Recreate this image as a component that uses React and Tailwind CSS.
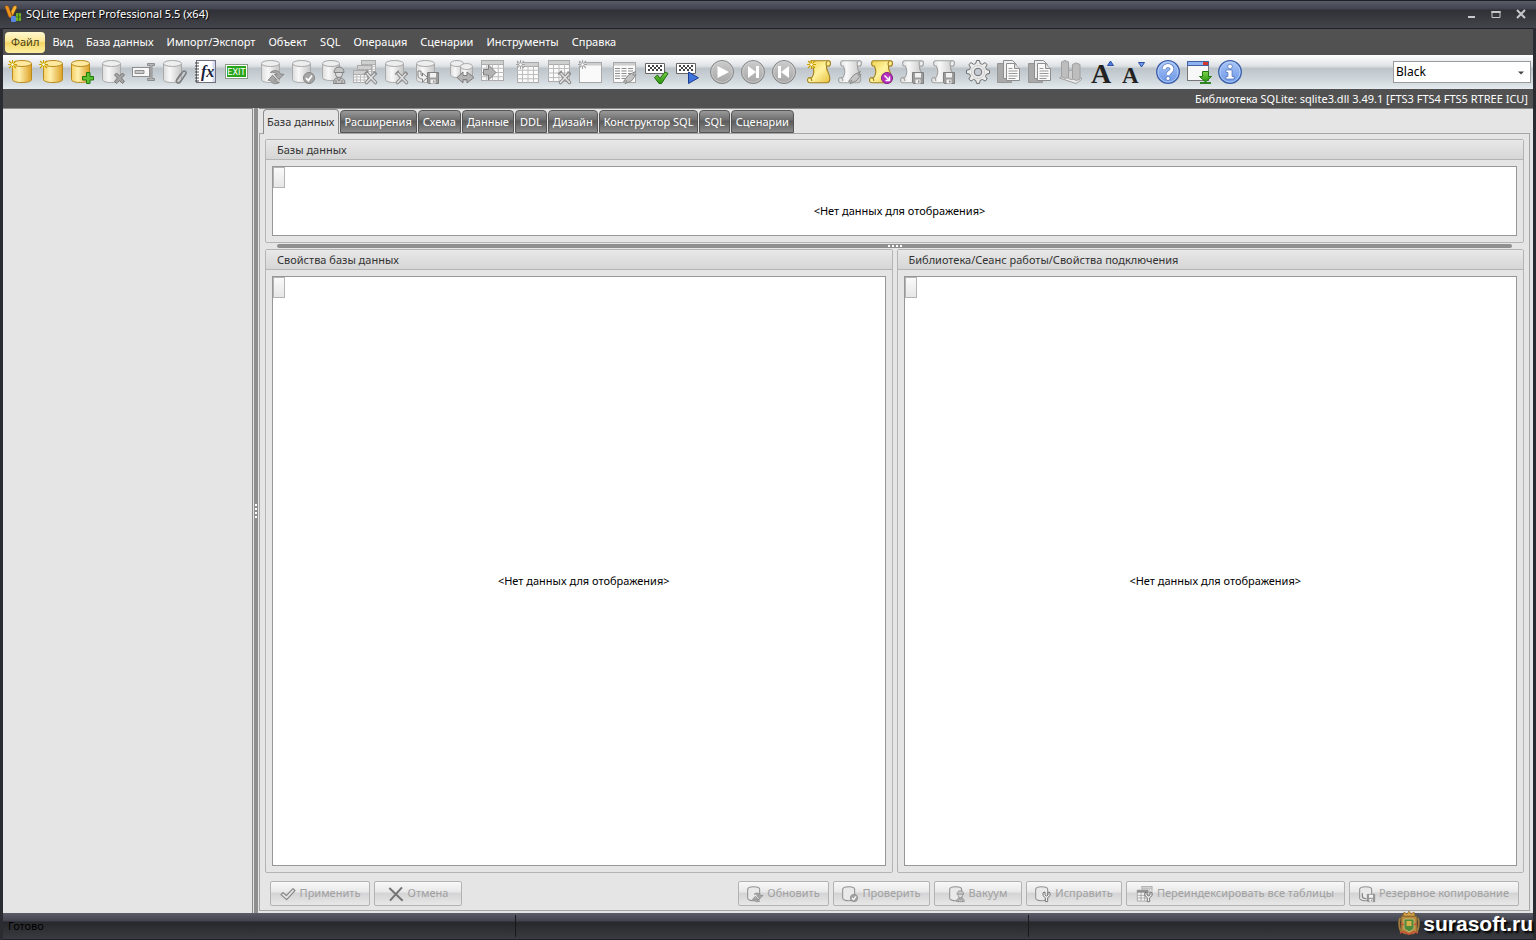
import React, { useState } from "react";

const menuItems = ["Файл", "Вид", "База данных", "Импорт/Экспорт", "Объект", "SQL", "Операция", "Сценарии", "Инструменты", "Справка"];

const tabs = ["База данных", "Расширения", "Схема", "Данные", "DDL", "Дизайн", "Конструктор SQL", "SQL", "Сценарии"];

/* ---------- icon parts ---------- */

function Defs() {
  return (
    <svg width="0" height="0" className="absolute" aria-hidden="true">
      <defs>
        <linearGradient id="gold" x1="0" x2="1" y1="0" y2="0">
          <stop offset="0" stopColor="#f6cf62" />
          <stop offset="0.35" stopColor="#fff0ae" />
          <stop offset="1" stopColor="#dda126" />
        </linearGradient>
        <linearGradient id="gray" x1="0" x2="1" y1="0" y2="0">
          <stop offset="0" stopColor="#dcdcdc" />
          <stop offset="0.35" stopColor="#f8f8f8" />
          <stop offset="1" stopColor="#c6c6c6" />
        </linearGradient>
        <linearGradient id="scrollGold" x1="0" x2="1" y1="0" y2="1">
          <stop offset="0" stopColor="#f0d048" />
          <stop offset="0.5" stopColor="#fff3a0" />
          <stop offset="1" stopColor="#e6bd38" />
        </linearGradient>
        <linearGradient id="blue" x1="0" x2="0" y1="0" y2="1">
          <stop offset="0" stopColor="#a9c6f8" />
          <stop offset="1" stopColor="#6b96e6" />
        </linearGradient>
        <linearGradient id="green" x1="0" x2="0" y1="0" y2="1">
          <stop offset="0" stopColor="#7fd24a" />
          <stop offset="1" stopColor="#27930f" />
        </linearGradient>
        <linearGradient id="round" x1="0" x2="0" y1="0" y2="1">
          <stop offset="0" stopColor="#cccccc" />
          <stop offset="1" stopColor="#a6a6a6" />
        </linearGradient>
      </defs>
    </svg>
  );
}

function Cylinder({ x = 1, gold, w = 19, h = 23, y = 0 }) {
  const stroke = gold ? "#b98a1c" : "#a9a9a9";
  const r = w / 2;
  return (
    <g transform={`translate(${x} ${y})`} stroke={stroke} strokeWidth="1">
      <path
        d={`M.5 3.5V${h - 3.5}C.5 ${h - 1.5} ${r / 2} ${h - 0.5} ${r} ${h - 0.5}S${w - 0.5} ${h - 1.5} ${w - 0.5} ${h - 3.5}V3.5`}
        fill={gold ? "url(#gold)" : "url(#gray)"}
      />
      <ellipse cx={r} cy="3.5" rx={r - 0.5} ry="3" fill={gold ? "#ffe9a0" : "#eeeeee"} />
    </g>
  );
}

function Star({ gray }) {
  const color = gray ? "#a4a4a4" : "#c9a000";
  return (
    <g>
      <circle cx="4.5" cy="4.5" r="3" fill={gray ? "#f4f4f4" : "#fff6a8"} />
      <path d="M4.5 0v9M0 4.5h9M1 1l7 7M8 1L1 8" stroke={color} strokeWidth="1.1" fill="none" />
      <circle cx="4.5" cy="4.5" r="1.2" fill="#fff" />
    </g>
  );
}

function Scroll({ gold }) {
  const stroke = gold ? "#a08022" : "#a2a2a2";
  const fill = gold ? "url(#scrollGold)" : "url(#gray)";
  return (
    <g stroke={stroke} strokeWidth="1.1" strokeLinejoin="round" fill={fill}>
      <path d="M4.5.8H21.500c2.400 0 2.600 3.800.6 5.200h-2.600c-.8 3.800 3.300 7 3.300 12.200 0 3-.8 4.600-3 4.600H3C.3 22.800-.2 19.200 1.500 17.800h3.200c2.600-3.600 2.600-8 .6-11.800H4.500C2 5.800 2 1 4.500.8z" />
      <path d="M21.500.8c-2.200 0-3 2.700-2 5.200h2.600c2-1.400 1.800-5.200-.6-5.200zM1.500 17.800c2-.5 3.500 1 3.200 3.200" fill={gold ? "#ffec8c" : "#ededed"} />
    </g>
  );
}

function Grid({ x = 1, y = 1, w = 22, h = 20, rows = 4, cols = 4 }) {
  const lines = [];
  for (let i = 1; i < cols; i++) lines.push(`M${x + (w / cols) * i} ${y + 4}V${y + h}`);
  for (let i = 1; i < rows; i++) lines.push(`M${x} ${y + 4 + ((h - 4) / rows) * i}h${w}`);
  return (
    <g stroke="#ababab" strokeWidth="1">
      <rect x={x + 0.5} y={y + 0.5} width={w - 1} height={h - 1} fill="#fafafa" />
      <rect x={x + 0.5} y={y + 0.5} width={w - 1} height="4" fill="#cfcfcf" />
      <path d={lines.join("")} fill="none" stroke="#bcbcbc" />
    </g>
  );
}

function Tools() {
  return (
    <g fill="none" strokeLinecap="round">
      <path d="M13.500 22.500l8.500-9M14 13.500l8.500 9" stroke="#8e8e8e" strokeWidth="3.600" />
      <path d="M13.500 22.500l8.500-9M14 13.500l8.500 9" stroke="#e2e2e2" strokeWidth="1.500" />
      <path d="M11.500 14l3-3M21 12l2.500 2" stroke="#8e8e8e" strokeWidth="1.500" />
    </g>
  );
}

function Disk() {
  return (
    <g>
      <path d="M12.500 12.500h11v11h-10l-1-1z" fill="#9c9c9c" stroke="#7f7f7f" />
      <path d="M15 13h6v4.500h-6zM15.500 19.500h5v4h-5z" fill="#f1f1f1" />
      <path d="M18 20.500h1.500v2H18z" fill="#888" />
    </g>
  );
}

function Refresh() {
  return (
    <g fill="#a8a8a8" stroke="#7c7c7c" strokeWidth=".8" strokeLinejoin="round">
      <path d="M10.500 12.500c3-3 8.500-2.500 10 1.500l3.500.3-5 5-4.500-4.800 2.800-.2c-1.200-1.800-4-2.300-6.800-1.800z" />
      <path d="M19.500 22.500c-3.500 2-7.500 1.500-9-2l-2.500-.2 4.500-5 4.500 4.800h-2.500c.8 1.500 2.500 2.400 5 2.400z" />
    </g>
  );
}

function CheckBadge() {
  return (
    <g>
      <circle cx="18" cy="18" r="5.500" fill="#a5a5a5" stroke="#868686" />
      <path d="M15 18l2.300 2.500L21 15.500" fill="none" stroke="#fff" strokeWidth="1.800" />
    </g>
  );
}

function Worker() {
  return (
    <g fill="#c4c4c4" stroke="#848484" strokeWidth="1">
      <path d="M11.500 23.500c0-4 2-6 5.500-6s6 2 6 6z" />
      <circle cx="17" cy="14" r="3.500" fill="#dedede" />
      <path d="M12 12.500c0-3.500 2-5.500 5-5.500s5 2 5 5.500z" />
      <path d="M15 18l2 3 2-3M14 23v-3M20 23v-3" fill="none" />
    </g>
  );
}

function Bolt() {
  return <path d="M22.500 11.500l-7 3.500-5 6.500 3.500-.8-2 3 7-3.200 4-6-3.200.6z" fill="#c4c4c4" stroke="#858585" strokeWidth=".9" strokeLinejoin="round" />;
}

function Clip() {
  return (
    <path d="M13.500 20.500l6-8.500c1.800-2.200 4.600-.4 3.200 2l-5.400 8c-1.600 2.300-5.200.5-3.700-2.200l4.300-6.300" fill="none" stroke="#7e7e7e" strokeWidth="1.500" />
  );
}

function Window({ x = 1, children }) {
  return (
    <g>
      <rect x={x + 0.5} y="2.500" width="22" height="20" fill="#fafafa" stroke="#a8a8a8" />
      <path d={`M${x + 1} 3h21v2.500h-21z`} fill="#cdcdcd" />
      {children}
    </g>
  );
}

function Flag() {
  return (
    <g>
      <path d="M1.500 13.500v-10h19v10z" fill="#fff" stroke="#666" />
      <path
        d="M4 5h2v2H4zM8 5h2v2H8zM12 5h2v2h-2zM16 5h2v2h-2zM6 7h2v2H6zM10 7h2v2h-2zM14 7h2v2h-2zM4 9h2v2H4zM8 9h2v2H8zM12 9h2v2h-2zM16 9h2v2h-2z"
        fill="#444"
      />
    </g>
  );
}

function Round({ children }) {
  return (
    <g>
      <circle cx="12" cy="12" r="11.500" fill="url(#round)" stroke="#858585" />
      <circle cx="12" cy="12" r="10.300" fill="none" stroke="#d0d0d0" strokeWidth=".7" />
      <g fill="#fff">{children}</g>
    </g>
  );
}

function Pages() {
  return (
    <g>
      <path d="M.5 3.500h14v19H.5z" fill="#a9a9a9" stroke="#969696" />
      <path d="M6.500.5h9l4 4v14h-13z" fill="#efefef" stroke="#8e8e8e" />
      <path d="M9.500 3.500h8l5 5v12h-13z" fill="#fafafa" stroke="#8e8e8e" />
      <path d="M17.500 3.500v5h5" fill="#ddd" stroke="#8e8e8e" />
      <path d="M11.500 8.500h4M11.500 11h9M11.500 13.500h9M11.500 16h9M11.500 18.500h7" stroke="#999" />
    </g>
  );
}

/* outlined database used on the bottom buttons */
function SmallDb() {
  return (
    <path
      d="M1 5C1 2.500 4 1 10 1s9 1.500 9 4v13.500c-1 2-4 3.500-8.500 3.500S1 21 1 18.500z"
      fill="#e9e9e9"
      stroke="#929292"
      strokeWidth="1.600"
    />
  );
}

function Wrench() {
  return (
    <path d="M12 10v4.500l3.500 3v6h3.500v-6l3.500-3V10l-3-1v4.500L17.300 15 15 13.500V9z" fill="#f1f1f1" stroke="#777" strokeWidth="1.500" strokeLinejoin="round" />
  );
}

function BlueRound({ children }) {
  return (
    <g>
      <circle cx="12" cy="12" r="11.300" fill="url(#blue)" stroke="#3c5fa8" strokeWidth="1.300" />
      <circle cx="12" cy="12" r="10" fill="none" stroke="#b9d0fa" strokeWidth=".8" />
      {children}
    </g>
  );
}

const icons = {
  dbNew: <><Cylinder x={4} gold w={20} /><Star /></>,
  dbAdd: (
    <>
      <Cylinder gold />
      <path d="M16.500 12.500h3.500v4h3.500V20H20v3.500h-3.500V20h-4v-3.500h4z" fill="#5cc12e" stroke="#23790d" />
    </>
  ),
  dbDelete: (
    <>
      <Cylinder />
      <path d="M13.500 15l2-2 3 3 3-3 2 2-3 3 3 3.500-2 2-3-3-3 3-2-2 3-3.500z" fill="#a3a3a3" stroke="#777" />
    </>
  ),
  rename: (
    <g fill="#f7f7f7" stroke="#8d8d8d">
      <rect x=".5" y="7.500" width="17" height="9" />
      <path d="M3 10.500h9v3H3z" fill="#c9c9c9" />
      <path d="M15.500 3.500h7v2h-2.500v13h2.500v2h-7v-2H18v-13h-2.500z" fill="#b5b5b5" />
    </g>
  ),
  dbAttach: <><Cylinder x={0} /><Clip /></>,
  fx: (
    <g>
      <rect x="2.500" y=".5" width="19" height="22" fill="#fff" stroke="#6f6f7d" />
      <path d="M18.500 1v21H21V1z" fill="#d5daee" />
      <path d="M1 3h4M1 6h4M1 9h4M1 12h4M1 15h4M1 18h4M1 21h4" stroke="#444" strokeWidth="1.200" />
      <text x="7" y="17" fontSize="16" fontStyle="italic" fontWeight="bold" fontFamily="Liberation Serif, serif" fill="#1a1f3c">fx</text>
    </g>
  ),
  exit: (
    <g>
      <rect x=".5" y="4.500" width="22" height="14" fill="#fff" stroke="#8a9a86" />
      <rect x="2" y="6" width="19" height="11" fill="#27a51c" />
      <text x="11.500" y="15" textAnchor="middle" fontSize="9" fontFamily="Roboto, sans-serif" fill="#fff">EXIT</text>
    </g>
  ),
  dbRefresh: <><Cylinder /><Refresh /></>,
  dbCheck: <><Cylinder /><CheckBadge /></>,
  dbWorker: <><Cylinder x={0} w={18} h={21} /><Worker /></>,
  reindex: (
    <>
      <Grid x={8} y={0} w={15} h={12} rows={3} />
      <Grid x={4} y={5} w={15} h={12} rows={3} />
      <Grid x={0} y={10} w={15} h={13} rows={3} />
      <Tools />
    </>
  ),
  dbTools: <><Cylinder /><Tools /></>,
  dbBackup: (
    <>
      <Cylinder />
      <Disk />
      <path d="M3 11v4c0 3 2 4 4.500 4v3l5-4.500-5-4.500v3c-1 0-1.500-.5-1.500-2v-3z" fill="#f2f2f2" stroke="#7e7e7e" />
    </>
  ),
  compare: (
    <>
      <Cylinder x={0} w={14} h={18} />
      <Cylinder x={10} y={3} w={13} h={18} />
      <path d="M7 17.500l6-5.500v3.500h4V12l7 5.500-7 5.500v-3.500h-4V23z" fill="#b4b4b4" stroke="#7e7e7e" />
    </>
  ),
  importTable: (
    <>
      <Grid x={0} y={0} w={23} h={21} rows={4} />
      <path d="M2.500 9.500h5V5l7.500 7.500L7.500 20v-5h-5z" fill="#b3b3b3" stroke="#808080" />
    </>
  ),
  tableNew: <><Grid x={1} y={2} w={22} h={21} /><Star gray /></>,
  tableTools: <><Grid x={1} y={0} w={22} h={22} /><Tools /></>,
  windowNew: <><Window /><Star gray /></>,
  queryBolt: (
    <>
      <Window x={0}>
        <path d="M2 8.500h19M2 11h19M2 13.500h19M2 16h19M2 18.500h19" stroke="#8f8f8f" strokeDasharray="5 1.500" />
      </Window>
      <Bolt />
    </>
  ),
  flagCheck: (
    <>
      <Flag />
      <path d="M10.500 17.500l3-2.500 2.500 3.500 5-6.500 3 1.500-6.500 10h-2.500z" fill="url(#green)" stroke="#1f6d0d" />
    </>
  ),
  flagRun: (
    <>
      <Flag />
      <path d="M13.500 12v11.500l10-5.700z" fill="#3f74dc" stroke="#1e3f91" strokeLinejoin="round" />
    </>
  ),
  play: <Round><path d="M7.500 6L19 12 7.500 18z" /></Round>,
  last: <Round><path d="M7 6l8 6-8 6zM15 6h3v12h-3z" /></Round>,
  first: <Round><path d="M17 6l-8 6 8 6zM6 6h3v12H6z" /></Round>,
  scrollNew: <><Scroll gold /><Star /></>,
  scrollBolt: <><Scroll /><Bolt /></>,
  scrollRun: (
    <>
      <Scroll gold />
      <circle cx="18" cy="18" r="5.500" fill="#b730bd" stroke="#802187" />
      <path d="M15.500 15.500l4.500 4.500M20.500 16.500v4h-4" fill="none" stroke="#fff" strokeWidth="1.500" />
    </>
  ),
  scrollSave: <><Scroll /><Disk /></>,
  gear: (
    <g stroke="#6f6f6f">
      <path
        d="M10.500.5h3l.6 3 2.300.9L19 2.600l2.200 2.100-1.700 2.600 1 2.300 3 .7v3.200l-3 .6-1 2.300 1.700 2.600-2.200 2.100-2.600-1.700-2.300 1-.6 3h-3l-.7-3-2.200-1L5 21.100 2.800 19l1.700-2.600-.9-2.300-3.100-.6v-3.200l3.100-.7.9-2.300-1.700-2.600L5 2.600l2.600 1.800 2.200-.9z"
        fill="#ececec"
        strokeLinejoin="round"
      />
      <circle cx="12" cy="12" r="3.800" fill="#c3cad1" />
      <circle cx="12" cy="12" r="6.500" fill="none" stroke="#cfcfcf" />
    </g>
  ),
  copy: <Pages />,
  chart: (
    <g stroke="#a0a0a0" strokeLinejoin="round">
      <path d="M.5 18l4-2.500 18 2.500v1.500L17 23.500z" fill="#ededed" />
      <path d="M2.500 2l3.500-1.500L9.500 2v15.500l-3 1-4-1.500z" fill="#bdbdbd" />
      <path d="M9.500 11l2.500-1 2 1v8l-2 .5-2.500-1z" fill="#cfcfcf" />
      <path d="M13.500 4.500l3.500-1.500 4 1.500V19l-3.500 1.500-4-1.500z" fill="#bdbdbd" />
    </g>
  ),
  fontUp: (
    <g>
      <text x="1" y="23" fontSize="28" fontWeight="bold" fontFamily="Liberation Serif, serif" fill="#222">A</text>
      <path d="M17.500 5.500L20.500 1l3 4.500z" fill="#4d7cdb" stroke="#2c51a5" />
    </g>
  ),
  fontDown: (
    <g>
      <text x="1" y="23" fontSize="23" fontWeight="bold" fontFamily="Liberation Serif, serif" fill="#222">A</text>
      <path d="M17.500 2.500l3 4.500 3-4.500z" fill="#6f97e8" stroke="#2c51a5" />
    </g>
  ),
  help: (
    <BlueRound>
      <path d="M8 9.200C8 4.500 16 4.500 16 9c0 3-4 2.800-4 6" fill="none" stroke="#3c5fa8" strokeWidth="4.200" />
      <path d="M8 9.200C8 4.500 16 4.500 16 9c0 3-4 2.800-4 6" fill="none" stroke="#fff" strokeWidth="3.200" />
      <circle cx="12" cy="18.500" r="2" fill="#fff" stroke="#3c5fa8" strokeWidth=".6" />
    </BlueRound>
  ),
  download: (
    <g>
      <rect x=".5" y="1.500" width="21" height="19" fill="#f8f8f8" stroke="#777" />
      <path d="M.5 1.500h21v4H.5z" fill="#8db1f2" stroke="#40609f" />
      <path d="M16 2h5v3h-5z" fill="#d2392c" />
      <path d="M15.500 11.500h6v5h3L18.500 22l-6-5.500h3z" fill="url(#green)" stroke="#1f7a0d" />
      <path d="M13 23h11" stroke="#1f7a0d" strokeWidth="1.800" />
    </g>
  ),
  info: (
    <BlueRound>
      <circle cx="12" cy="6.500" r="2.300" fill="#fff" stroke="#3c5fa8" strokeWidth=".6" />
      <path d="M8 10h6v6.500h2v2.500H8v-2.500h2v-4H8z" fill="#fff" stroke="#3c5fa8" strokeWidth=".6" />
    </BlueRound>
  ),
  apply: (
    <path d="M1.500 13l3-3 5 4.500L19.500 4l3 3L10 20.500z" fill="#e6e6e6" stroke="#868686" strokeWidth="1.800" strokeLinejoin="round" />
  ),
  cancel: <path d="M2 3l20 19M21 2L3 22" stroke="#747474" strokeWidth="3" fill="none" />,
  smallRefresh: <><SmallDb /><Refresh /></>,
  smallCheck: <><SmallDb /><CheckBadge /></>,
  smallWorker: <><SmallDb /><Worker /></>,
  smallRepair: <><SmallDb /><Wrench /></>,
  smallBackup: (
    <>
      <SmallDb />
      <path d="M5 11v4c0 3 2 4 6 4" fill="none" stroke="#858585" strokeWidth="2" />
      <Disk />
    </>
  ),
  smallReindex: (
    <>
      <Grid x={7} y={0} w={16} h={14} rows={3} />
      <g stroke="#8f8f8f">
        <path d="M.5 6.500h16v16H.5z" fill="#f4f4f4" />
        <path d="M.5 6.500h16v3H.5z" fill="#8f8f8f" />
        <path d="M6 10v12M11.500 10v12M1 14h15M1 18h15" />
      </g>
      <Wrench />
    </>
  ),
};

function Icon({ name, className = "h-6 w-6" }) {
  return (
    <svg viewBox="0 0 24 24" className={`shrink-0 overflow-visible ${className}`} aria-hidden="true">
      {icons[name]}
    </svg>
  );
}

const toolbar = [
  ["dbNew", "dbNew", "dbAdd", "dbDelete", "rename", "dbAttach", "fx", "exit"],
  ["dbRefresh", "dbCheck", "dbWorker", "reindex", "dbTools", "dbBackup"],
  ["compare", "importTable"],
  ["tableNew", "tableTools", "windowNew"],
  ["queryBolt", "flagCheck", "flagRun"],
  ["play", "last", "first"],
  ["scrollNew", "scrollBolt", "scrollRun", "scrollSave", "scrollSave"],
  ["gear", "copy", "copy", "chart", "fontUp", "fontDown"],
  ["help", "download", "info"],
];

/* ---------- window parts ---------- */

function TitleBar() {
  return (
    <header className="flex h-7 items-center border-t border-[#1f2025] bg-[linear-gradient(#5a5c67_0,#41434e_8px,#303136_9px,#43454c_100%)] pb-px pl-1 pr-[7px]">
      <svg viewBox="0 0 18 18" className="mr-1 h-[18px] w-[18px]" aria-hidden="true">
        <path d="M1 1.500c2-1.500 3.500-.5 4 1.500l3 8c-.5 2-2.500 2-3.500 0z" fill="#f0941e" stroke="#a85a10" strokeWidth=".5" />
        <path d="M9.500 1.500c2-1.500 3.500-.5 3 1.500L8.500 11 7 6.500z" fill="#ffb62e" stroke="#a85a10" strokeWidth=".5" />
        <rect x="7" y="11" width="5" height="6" rx="1" fill="#5b86e0" />
        <rect x="12" y="8" width="5" height="8" rx="1" fill="#72b32a" />
        <path d="M12 12h5M14.500 8v8" stroke="#2f5c12" strokeWidth=".7" />
      </svg>
      <h1 className="text-white [text-shadow:1px_1px_1px_#000]">SQLite Expert Professional 5.5 (x64)</h1>
      <div className="ml-auto flex gap-[9px] text-[#c6c8cc]">
        <button aria-label="Свернуть" className="flex h-4 w-4 items-center justify-center">
          <svg viewBox="0 0 12 12" className="h-3 w-3"><path d="M3 9h7" stroke="currentColor" strokeWidth="2" /></svg>
        </button>
        <button aria-label="Развернуть" className="flex h-4 w-4 items-center justify-center">
          <svg viewBox="0 0 12 12" className="h-3 w-3"><path d="M2 3v6.500h8V3" stroke="currentColor" fill="none" /><path d="M1.500 4h9" stroke="currentColor" strokeWidth="2" /></svg>
        </button>
        <button aria-label="Закрыть" className="flex h-4 w-4 items-center justify-center">
          <svg viewBox="0 0 12 12" className="h-3 w-3"><path d="M2 2l8 8M10 2l-8 8" stroke="currentColor" strokeWidth="2" /></svg>
        </button>
      </div>
    </header>
  );
}

function MenuBar() {
  return (
    <nav className="flex h-[27px] items-center gap-px border-t border-[#1f2025] bg-[#515151] pl-0.5">
      {menuItems.map((item, i) => (
        <button
          key={item}
          className={
            i === 0
              ? "h-[21px] rounded-sm bg-[linear-gradient(#fff8d0_0,#fbe794_45%,#f3d566_50%,#fdf0a0_100%)] px-1.5 text-[#4a3f18]"
              : "h-[21px] px-1.5 text-white"
          }
        >
          {item}
        </button>
      ))}
    </nav>
  );
}

function Toolbar() {
  return (
    <div className="flex h-[34px] items-center bg-[linear-gradient(#ffffff_0,#e1e4e7_30%,#d3d7db_36%,#bcc4ca_38%,#cdd5da_70%,#e4eaed_100%)] pl-px pr-0.5">
      <div className="flex gap-1">
        {toolbar.map((group, i) => (
          <div key={i} className="flex">
            {group.map((name, j) => (
              <button key={j} aria-label={name} className="flex h-7 w-[31px] items-center justify-center">
                <Icon name={name} />
              </button>
            ))}
          </div>
        ))}
      </div>
      <div className="relative ml-auto">
        <select aria-label="Тема" defaultValue="Black" className="h-[22px] w-[138px] appearance-none border border-[#9a9a9a] bg-white pl-0.5 text-xs text-black">
          <option>Black</option>
        </select>
        <svg viewBox="0 0 8 4" className="pointer-events-none absolute right-1.5 top-2.5 h-1 w-2"><path d="M1 .5h6L4 3.500z" fill="#444" /></svg>
      </div>
    </div>
  );
}

function Tabs() {
  const [active, setActive] = useState(0);
  return (
    <div role="tablist" className="relative z-10 -mb-px flex h-[25px] gap-px pl-1">
      {tabs.map((tab, i) => (
        <button
          key={tab}
          role="tab"
          aria-selected={i === active}
          onClick={() => setActive(i)}
          className={
            i === active
              ? "rounded-t border border-b-0 border-[#8c8c8c] bg-[#e5e5e5] px-[3px] text-[#333]"
              : "mb-px mt-px rounded-t-sm border border-[#555] bg-[linear-gradient(#9a9a9a_0,#707070_40%,#5c5c5c_50%,#8a8a8a_100%)] px-1 pt-px text-white"
          }
        >
          {tab}
        </button>
      ))}
    </div>
  );
}

function Group({ title, className }) {
  return (
    <section className={`flex flex-col rounded-xs border border-[#b4b4b4] ${className}`}>
      <h2 className="h-5 border-b border-[#b4b4b4] bg-[linear-gradient(#e8e8e8,#d6d6d6)] pl-[11px] leading-5 text-[#333]">{title}</h2>
      <div className="m-1.5 flex flex-1 flex-col border border-[#979797] bg-white">
        <div className="h-[21px] w-3 border border-[#b4b4b4] bg-[linear-gradient(#fafafa,#e6e6e6)]" />
        <div className="flex flex-1 items-center justify-center pl-2.5 text-black">&lt;Нет данных для отображения&gt;</div>
      </div>
    </section>
  );
}

function ActionButton({ icon, label, className }) {
  return (
    <button disabled className={`flex h-[25px] items-center justify-center gap-1 rounded-xs border border-[#b2b2b2] bg-[linear-gradient(#f8f8f8_0,#e9e9ea_42%,#d4d4d6_50%,#e8e8e8_100%)] text-[#a0a0a0] ${className}`}>
      <Icon name={icon} className="h-4 w-4" />
      {label}
    </button>
  );
}

function Actions() {
  return (
    <div className="flex gap-1 px-[5px] pt-2">
      <ActionButton icon="apply" label="Применить" className="w-[100px]" />
      <ActionButton icon="cancel" label="Отмена" className="w-[88px]" />
      <div className="flex-1" />
      <ActionButton icon="smallRefresh" label="Обновить" className="w-[91px]" />
      <ActionButton icon="smallCheck" label="Проверить" className="w-[97px]" />
      <ActionButton icon="smallWorker" label="Вакуум" className="w-[88px]" />
      <ActionButton icon="smallRepair" label="Исправить" className="w-[96px]" />
      <ActionButton icon="smallReindex" label="Переиндексировать все таблицы" className="w-[219px]" />
      <ActionButton icon="smallBackup" label="Резервное копирование" className="w-[170px]" />
    </div>
  );
}

function Dots({ vertical }) {
  return (
    <div className={vertical ? "flex flex-col gap-0.5" : "flex gap-0.5"}>
      <i className="h-0.5 w-0.5 bg-white" />
      <i className="h-0.5 w-0.5 bg-white" />
      <i className="h-0.5 w-0.5 bg-white" />
      <i className="h-0.5 w-0.5 bg-white" />
    </div>
  );
}

function StatusBar() {
  return (
    <footer className="relative flex h-[27px] border-b border-[#1f2025] bg-[linear-gradient(#5a5c67_0,#41434e_8px,#27282b_9px,#3a3b40_100%)] py-0.5 leading-[22px] text-black">
      <div className="w-[513px] border-r border-[#18191b] pl-[5px]">Готово</div>
      <div className="w-[513px] border-r border-[#18191b]" />
      <div className="absolute bottom-0.5 right-0 flex items-center gap-[3px]">
        <svg viewBox="0 0 22 26" className="h-[26px] w-[22px]" aria-hidden="true">
          <path d="M3 5h16v15l-3 3H6l-3-3z" fill="#b58a3c" stroke="#73582c" />
          <path d="M6 8h10v9c0 2-3 2-5 4-2-2-5-2-5-4z" fill="#4d8a3c" stroke="#d9bf7c" strokeWidth=".8" />
          <path d="M8.500 10h5v5h-5z" fill="#d8b04a" />
          <path d="M5 5l1-4 3 2 2-3 2 3 3-2 1 4z" fill="#d4a345" stroke="#8a5e28" strokeWidth=".6" />
          <path d="M2 7c-1.500 4-1 9 1 14M20 7c1.500 4 1 9-1 14" stroke="#a07a3a" strokeWidth="1.800" fill="none" />
          <path d="M2 22l4-1.500 5 3 5-3 4 1.500M3 12l3 2M19 12l-3 2" stroke="#c9503a" strokeWidth="1.500" fill="none" />
        </svg>
        <span className="font-['Liberation_Sans',Arial,sans-serif] text-[21px] font-bold text-white [text-shadow:2px_2px_2px_#000]">surasoft.ru</span>
      </div>
    </footer>
  );
}

export default function App() {
  return (
    <div className="flex min-h-screen flex-col bg-[#2b2c31] font-['Noto_Sans','Open_Sans',sans-serif] text-[11px]">
      <Defs />
      <TitleBar />
      <div className="mx-[3px] flex flex-1 flex-col">
        <MenuBar />
        <Toolbar />
        <div className="h-[19px] bg-[#515151] pr-[5px] text-right leading-5 text-white">
          Библиотека SQLite: sqlite3.dll 3.49.1 [FTS3 FTS4 FTS5 RTREE ICU]
        </div>
        <main className="flex flex-1 bg-[#e5e5e5]">
          <aside className="w-[250px] border-r border-t border-[#8c8c8c]" />
          <div className="ml-px flex w-1 items-center justify-center bg-[#8f8f8f]">
            <Dots vertical />
          </div>
          <div className="ml-px flex flex-1 flex-col border-t border-[#8c8c8c] pb-0.5 pr-[3px]">
            <Tabs />
            <div className="flex flex-1 flex-col border border-[#a6a6a6] p-[5px] pb-1">
              <Group title="Базы данных" className="h-[104px]" />
              <div className="mx-3 my-px flex h-1 items-center justify-center rounded-full bg-[#8f8f8f]">
                <Dots />
              </div>
              <div className="flex flex-1 gap-1">
                <Group title="Свойства базы данных" className="flex-1" />
                <Group title="Библиотека/Сеанс работы/Свойства подключения" className="flex-1" />
              </div>
              <Actions />
            </div>
          </div>
        </main>
        <StatusBar />
      </div>
    </div>
  );
}
